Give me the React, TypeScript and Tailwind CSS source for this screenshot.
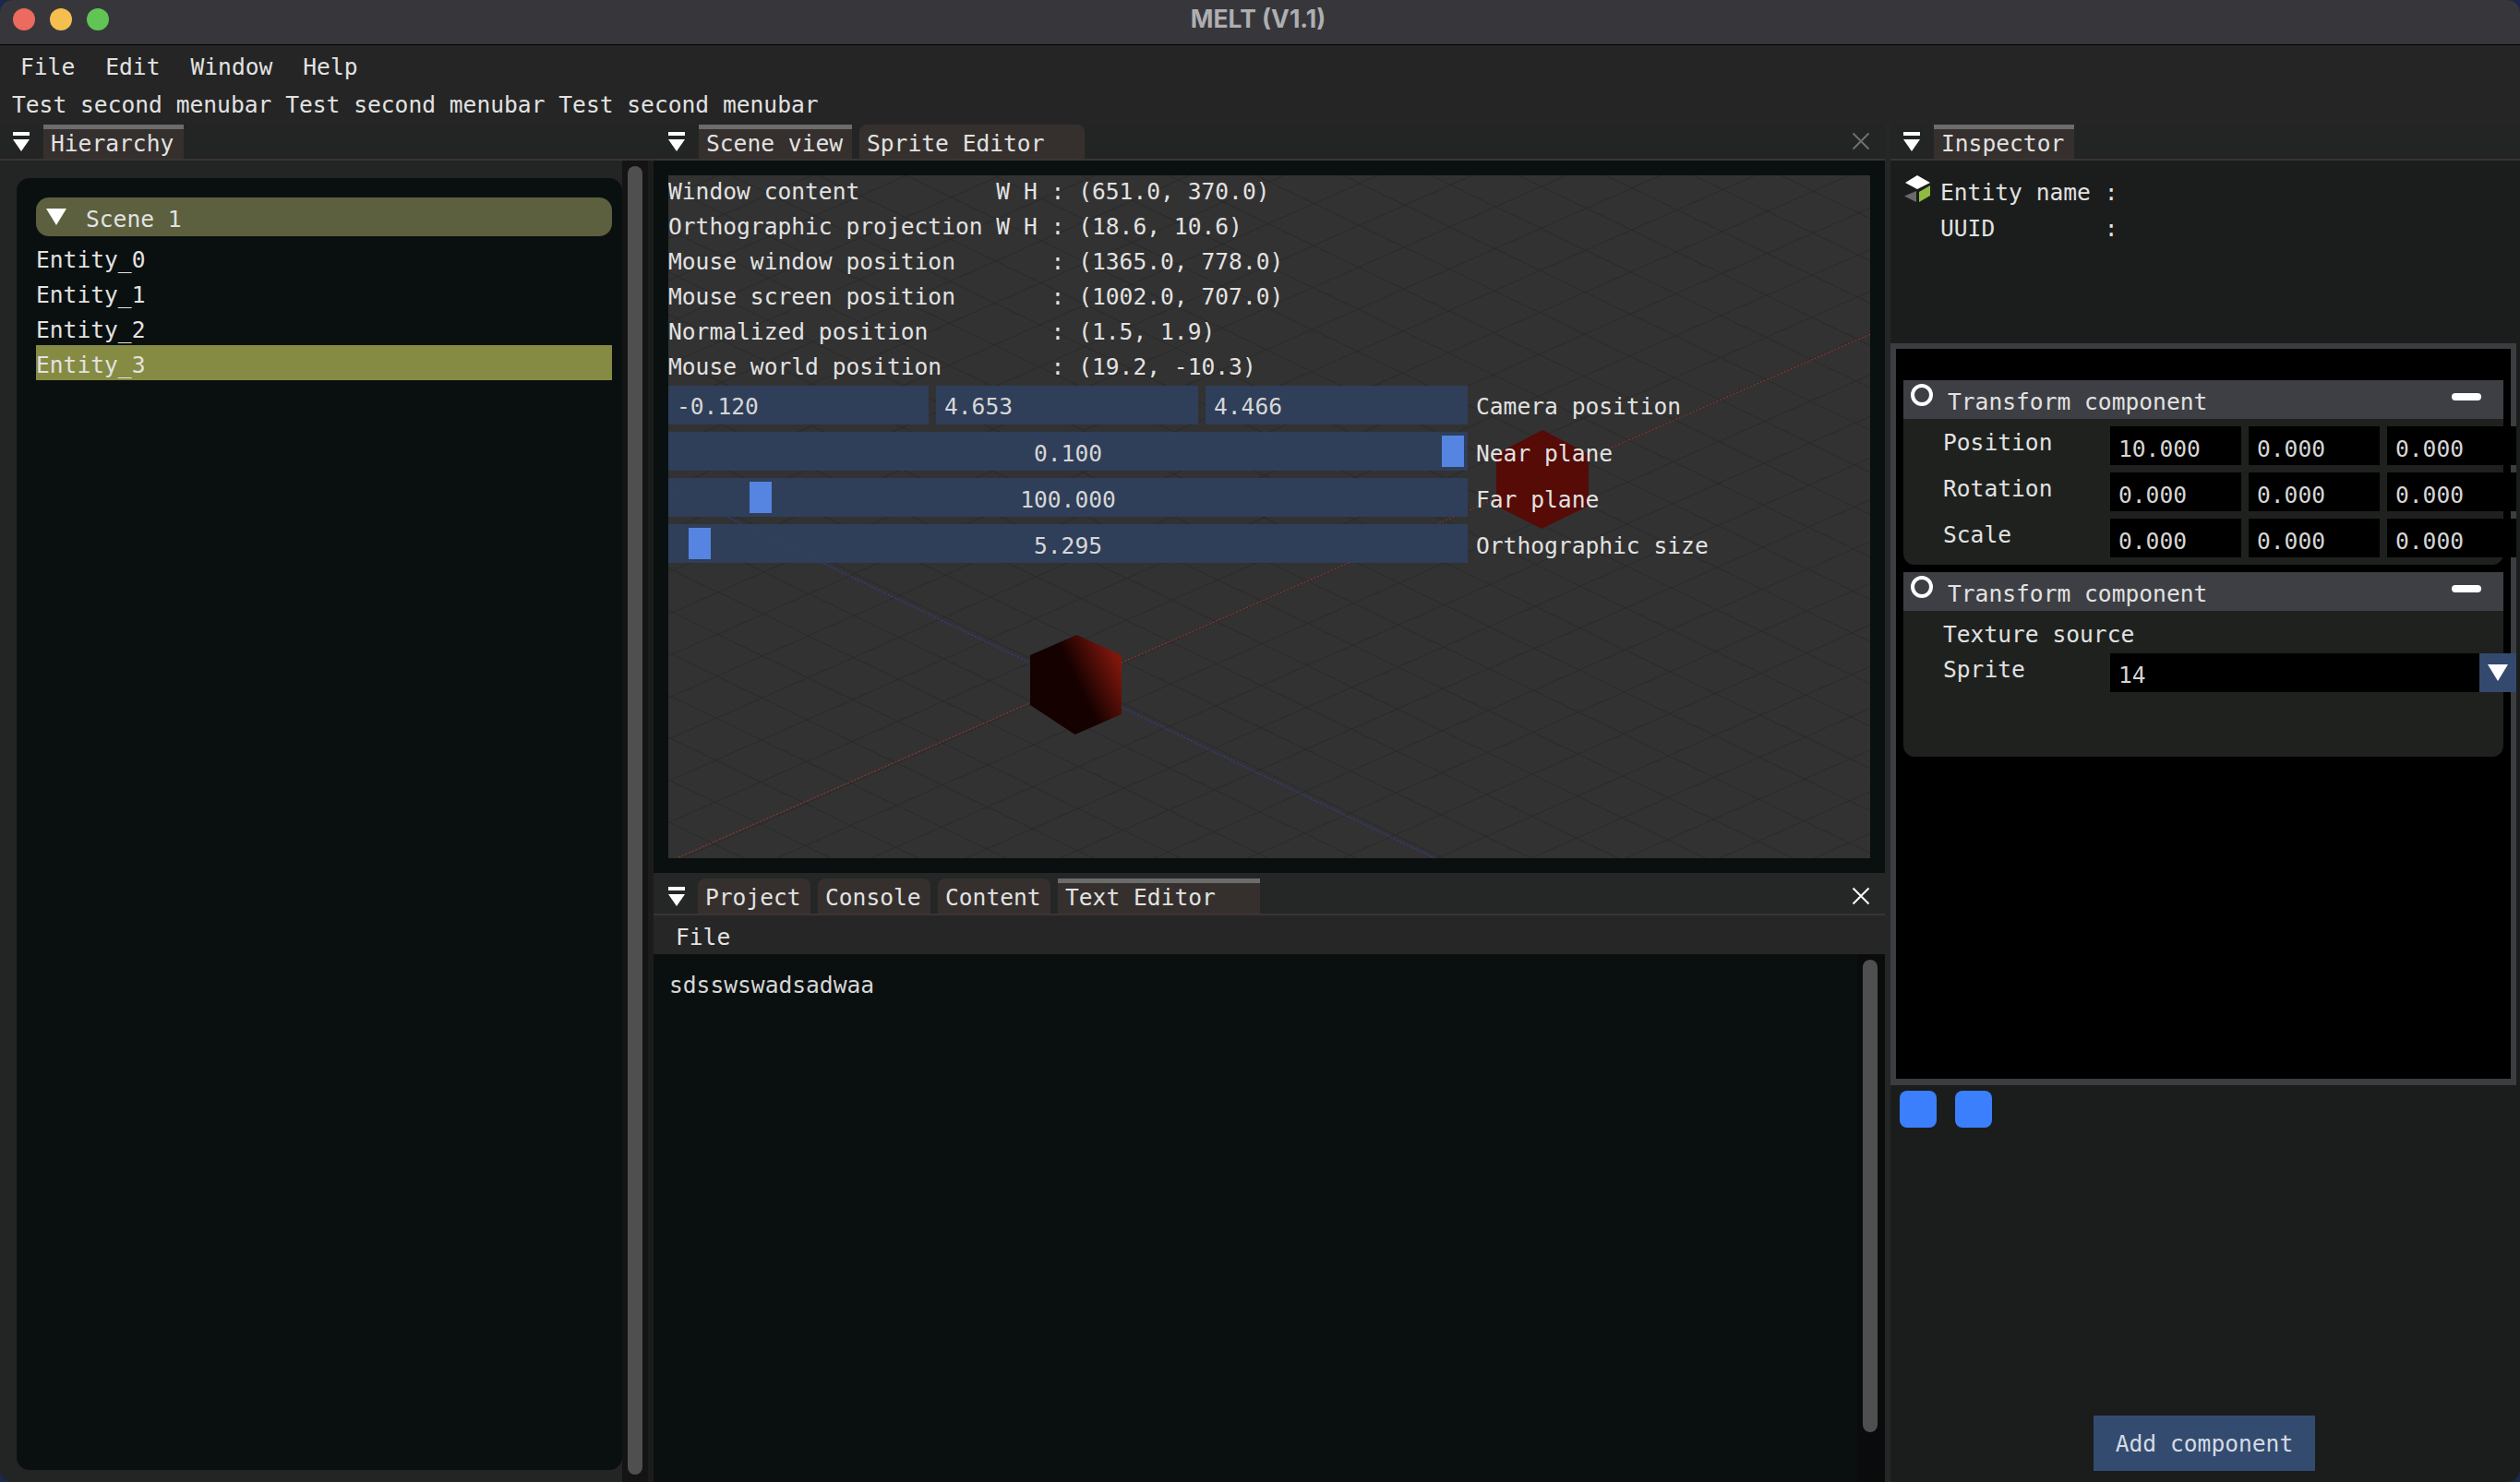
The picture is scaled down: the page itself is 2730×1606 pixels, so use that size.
import React from "react";

// dock tab-bar collapse icon
function DockIcon() {
  return (
    <svg width="18" height="21" viewBox="0 0 18 21" className="shrink-0">
      <rect x="0" y="0" width="18" height="4" fill="#fff" />
      <path d="M0 8H18L9 21Z" fill="#fff" />
    </svg>
  );
}

function CloseX({ color }: { color: string }) {
  return (
    <svg width="20" height="20" viewBox="0 0 20 20">
      <path d="M1.5 1.5L18.5 18.5M18.5 1.5L1.5 18.5" stroke={color} strokeWidth="2" />
    </svg>
  );
}

function Tab({ label, active, w }: { label: string; active?: boolean; w: string }) {
  return (
    <div
      className={`${w} flex h-full shrink-0 flex-col bg-[#35302e] ${active ? "" : "rounded-t-lg"}`}
    >
      <div className={`h-[5px] shrink-0 ${active ? "bg-[#6c6c6c]" : ""}`} />
      <div className="flex-1 pl-2 leading-[32px]">{label}</div>
    </div>
  );
}

function Ring() {
  return <div className="h-6 w-6 shrink-0 rounded-full border-[4px] border-white" />;
}

function CompHeader() {
  return (
    <div className="flex h-[42px] bg-[#3e3f44] pl-2">
      <div className="mt-1">
        <Ring />
      </div>
      <div className="ml-4 leading-[47px]">Transform component</div>
      <div className="ml-auto mr-6 mt-[14px] h-2 w-8 rounded-sm bg-white" />
    </div>
  );
}

function VecRow({ label, values }: { label: string; values: string[] }) {
  return (
    <div className="flex h-[42px]">
      <div className="w-[224px] shrink-0 pl-[43px] leading-[36px]">{label}</div>
      {values.map((v, i) => (
        <div
          key={i}
          className={`${i === 2 ? "w-[140px]" : "mr-2 w-[142px]"} relative h-[42px] shrink-0 bg-black pl-[9px] leading-[49px] text-[#d6d6d6]`}
        >
          {v}
        </div>
      ))}
    </div>
  );
}

function Slider({ value, label, grab }: { value: string; label: string; grab: React.ReactNode }) {
  return (
    <div className="flex h-[42px]">
      <div className="relative w-[866px] shrink-0 bg-[#2f3f5c]/95 text-center leading-[48px] text-[#d6d6d6]">
        {value}
        {grab}
      </div>
      <div className="ml-[9px] leading-[48px]">{label}</div>
    </div>
  );
}

// scene viewport: iso grid, axes and the two cubes
function SceneGrid() {
  const u = [49.5, -21.9];
  const v = [48.8, 23.6];
  const px = 791;
  const py = 487.3;
  const idx = Array.from({ length: 61 }, (_, i) => i - 30);
  return (
    <svg width="1302" height="740" className="absolute left-0 top-0">
      <defs>
        <linearGradient id="cube" gradientUnits="userSpaceOnUse" x1="443" y1="550" x2="488" y2="528">
          <stop offset="0" stopColor="#140100" />
          <stop offset="1" stopColor="#7e170d" />
        </linearGradient>
      </defs>
      {idx.map((j) => (
        <line
          key={`u${j}`}
          x1={px + j * v[0] - 40 * u[0]}
          y1={py + j * v[1] - 40 * u[1]}
          x2={px + j * v[0] + 40 * u[0]}
          y2={py + j * v[1] + 40 * u[1]}
          stroke="#2a2a2a"
          strokeWidth="1"
        />
      ))}
      {idx.map((i) => (
        <line
          key={`v${i}`}
          x1={px + i * u[0] - 40 * v[0]}
          y1={py + i * u[1] - 40 * v[1]}
          x2={px + i * u[0] + 40 * v[0]}
          y2={py + i * u[1] + 40 * v[1]}
          stroke="#2a2a2a"
          strokeWidth="1"
        />
      ))}
      <line x1="0" y1="744" x2="1302" y2="172" stroke="#a8352d" strokeWidth="1" strokeDasharray="2 2" />
      <line x1="0" y1="339.5" x2="1000" y2="822" stroke="#3341b8" strokeWidth="1" strokeDasharray="2 2" />
      <polygon points="947,276 997,302 997,358 946,383 897,358 897,302" fill="#560b06" />
      <polygon points="442.5,498 491,520 491,584 440.5,606 392,574 392,520" fill="url(#cube)" />
    </svg>
  );
}

function Cube() {
  return (
    <svg width="30" height="30" viewBox="0 0 30 30" className="shrink-0">
      <path d="M14 0L28 8L14 15L1 8Z" fill="#fff" />
      <path d="M16 18L28 11V22L16 29Z" fill="#8fbc3f" />
      <path d="M13 17V29L0 22.5Z" fill="#6a6a6a" />
    </svg>
  );
}

const info = [
  "Window content          W H : (651.0, 370.0)",
  "Orthographic projection W H : (18.6, 10.6)",
  "Mouse window position       : (1365.0, 778.0)",
  "Mouse screen position       : (1002.0, 707.0)",
  "Normalized position         : (1.5, 1.9)",
  "Mouse world position        : (19.2, -10.3)",
];

export default function App() {
  return (
    <div className="h-[1606px] w-[2730px] overflow-hidden bg-[#1c2750]">
      <div className="flex h-full w-full flex-col overflow-hidden rounded-[14px] bg-[#252626] font-['DejaVu_Sans_Mono',monospace] text-[24.6px] leading-[38px] whitespace-pre text-[#e2e2e2]">
        {/* title bar */}
        <div className="relative flex h-[49px] shrink-0 items-center border-b border-black bg-[#37373b] pb-[7px] pl-[14px]">
          <div className="flex gap-4">
            <div className="h-6 w-6 rounded-full bg-[#ec6a5e]" />
            <div className="h-6 w-6 rounded-full bg-[#f4bf4f]" />
            <div className="h-6 w-6 rounded-full bg-[#61c554]" />
          </div>
          <div className="absolute inset-x-0 top-[2px] pr-[4px] text-center font-['Inter',sans-serif] text-[26.5px] leading-[36px] font-bold text-[#aeaeb2]">
            MELT (V1.1)
          </div>
        </div>

        {/* menu bars */}
        <div className="flex h-[44px] shrink-0 items-center gap-[33px] bg-[#252525] pl-[22px] pt-[3px]">
          <span>File</span>
          <span>Edit</span>
          <span>Window</span>
          <span>Help</span>
        </div>
        <div className="flex h-[42px] shrink-0 items-center bg-[#252525] pl-[13px]">
          Test second menubar Test second menubar Test second menubar
        </div>

        <div className="flex min-h-0 flex-1">
          {/* hierarchy */}
          <div className="flex w-[708px] shrink-0 flex-col">
            <div className="flex h-[39px] shrink-0 border-b-2 border-[#3a3432] bg-[#232525]">
              <div className="ml-[14px] mr-[15px] mt-2">
                <DockIcon />
              </div>
              <Tab label="Hierarchy" active w="w-[152px]" />
            </div>
            <div className="flex min-h-0 flex-1 bg-[#232525]">
              <div className="mb-[13px] ml-[18px] mt-[19px] w-[656px] shrink-0 rounded-[14px] bg-[#0a1010] pl-[21px] pr-[11px] pt-[21px]">
                <div className="flex h-[42px] rounded-[14px] bg-[#5c603f] pl-[11px]">
                  <svg width="22" height="18" viewBox="0 0 22 18" className="mt-3 shrink-0">
                    <path d="M0 0H22L11 18Z" fill="#fff" />
                  </svg>
                  <span className="ml-[21px] leading-[48px]">Scene 1</span>
                </div>
                <div className="mt-1">
                  <div className="h-[38px] leading-[43px]">Entity_0</div>
                  <div className="h-[38px] leading-[43px]">Entity_1</div>
                  <div className="h-[38px] leading-[43px]">Entity_2</div>
                  <div className="h-[38px] bg-[#868b43] leading-[43px]">Entity_3</div>
                </div>
              </div>
              <div className="w-[28px] shrink-0 bg-[#141414] px-[6px] pt-[6px]">
                <div className="h-[1418px] rounded-full bg-[#4f4f4f]" />
              </div>
              <div className="w-[6px] shrink-0 bg-[#1c1c1c]" />
            </div>
          </div>

          {/* scene + bottom dock */}
          <div className="flex w-[1334px] shrink-0 flex-col">
            <div className="flex h-[39px] shrink-0 border-b-2 border-[#3a3432] bg-[#232525]">
              <div className="ml-4 mr-[15px] mt-2">
                <DockIcon />
              </div>
              <Tab label="Scene view" active w="w-[166px]" />
              <div className="w-2" />
              <Tab label="Sprite Editor" w="w-[244px]" />
              <div className="ml-auto mr-4 mt-[8px]">
                <CloseX color="#6f6f6f" />
              </div>
            </div>
            <div className="h-[772px] shrink-0 bg-[#0a1010] pb-4 pl-4 pr-4 pt-4">
              <div className="relative h-[740px] w-[1302px] overflow-hidden bg-[#323232]">
                <SceneGrid />
                <div className="relative">
                  {info.map((t) => (
                    <div key={t} className="h-[38px] leading-[36px]">
                      {t}
                    </div>
                  ))}
                  <div className="flex h-[42px]">
                    <div className="w-[282px] bg-[#2f3f5c]/95 pl-[9px] leading-[46px] text-[#d6d6d6]">-0.120</div>
                    <div className="ml-2 w-[284px] bg-[#2f3f5c]/95 pl-[9px] leading-[46px] text-[#d6d6d6]">4.653</div>
                    <div className="ml-2 w-[284px] bg-[#2f3f5c]/95 pl-[9px] leading-[46px] text-[#d6d6d6]">4.466</div>
                    <div className="ml-[9px] leading-[46px]">Camera position</div>
                  </div>
                  <div className="mt-2 flex flex-col gap-2">
                    <Slider
                      value="0.100"
                      label="Near plane"
                      grab={<div className="absolute left-[838px] top-1 h-[34px] w-6 bg-[#5585e0]" />}
                    />
                    <Slider
                      value="100.000"
                      label="Far plane"
                      grab={<div className="absolute left-[88px] top-1 h-[34px] w-6 bg-[#5585e0]" />}
                    />
                    <Slider
                      value="5.295"
                      label="Orthographic size"
                      grab={<div className="absolute left-[22px] top-1 h-[34px] w-6 bg-[#5585e0]" />}
                    />
                  </div>
                </div>
              </div>
            </div>

            <div className="flex h-[46px] shrink-0 items-end border-b-2 border-[#3a3432] bg-[#252626]">
              <div className="mb-2 ml-4 mr-[14px]">
                <DockIcon />
              </div>
              <div className="flex h-[38px] gap-2">
                <Tab label="Project" w="w-[122px]" />
                <Tab label="Console" w="w-[122px]" />
                <Tab label="Content" w="w-[122px]" />
                <Tab label="Text Editor" active w="w-[219px]" />
              </div>
              <div className="mb-[9px] ml-auto mr-4">
                <CloseX color="#ffffff" />
              </div>
            </div>
            <div className="h-[42px] shrink-0 bg-[#262626] pl-6 leading-[48px]">File</div>
            <div className="flex min-h-0 flex-1 bg-[#0a1010]">
              <div className="flex-1 pl-[17px] pt-[15px] text-[#d6d6d6]">sdsswswadsadwaa</div>
              <div className="w-[30px] shrink-0 bg-[#0a0b0c] pl-[6px] pt-[6px]">
                <div className="h-[512px] w-4 rounded-full bg-[#4f4f4f]" />
              </div>
            </div>
          </div>

          <div className="w-[6px] shrink-0 bg-[#252727]" />

          {/* inspector */}
          <div className="flex min-w-0 flex-1 flex-col">
            <div className="flex h-[39px] shrink-0 border-b-2 border-[#3a3432] bg-[#232525]">
              <div className="ml-[14px] mr-[15px] mt-2">
                <DockIcon />
              </div>
              <Tab label="Inspector" active w="w-[152px]" />
            </div>
            <div className="flex min-h-0 flex-1 flex-col bg-[#1b1d1c]">
              <div className="flex h-[198px] shrink-0 pl-[15px] pt-4">
                <Cube />
                <div className="ml-[9px] leading-[37px]">
                  <div className="h-[39px]">Entity name :</div>
                  <div className="h-[39px]">UUID        :</div>
                </div>
              </div>
              <div className="h-[804px] w-[678px] shrink-0 border-x-[6px] border-b-[7px] border-t-[6px] border-[#3b3d40] bg-black pl-2 pr-2 pt-[34px]">
                <div className="h-[200px] rounded-b-xl bg-[#1f211f]">
                  <CompHeader />
                  <div className="flex flex-col gap-2 pt-2">
                    <VecRow label="Position" values={["10.000", "0.000", "0.000"]} />
                    <VecRow label="Rotation" values={["0.000", "0.000", "0.000"]} />
                    <VecRow label="Scale" values={["0.000", "0.000", "0.000"]} />
                  </div>
                </div>
                <div className="mt-2 h-[200px] rounded-b-xl bg-[#1f211f]">
                  <CompHeader />
                  <div className="h-[46px] pl-[43px] leading-[52px]">Texture source</div>
                  <div className="flex h-[42px]">
                    <div className="w-[224px] shrink-0 pl-[43px] leading-[36px]">Sprite</div>
                    <div className="relative flex h-[42px] w-[440px] shrink-0 bg-black">
                      <div className="w-[400px] pl-[9px] leading-[47px] text-[#d6d6d6]">14</div>
                      <div className="flex w-10 justify-center bg-[#34496e] pt-3">
                        <svg width="22" height="18" viewBox="0 0 22 18">
                          <path d="M0 0H22L11 18Z" fill="#fff" />
                        </svg>
                      </div>
                    </div>
                  </div>
                </div>
              </div>
              <div className="ml-[10px] mt-[6px] flex gap-5">
                <div className="h-10 w-10 rounded-lg bg-[#3b7ffd]" />
                <div className="h-10 w-10 rounded-lg bg-[#3b7ffd]" />
              </div>
              <div className="mb-3 ml-[220px] mt-auto h-[60px] w-[240px] bg-[#344b70] text-center leading-[62px] text-[#d4dbe4]">
                Add component
              </div>
            </div>
          </div>
        </div>
      </div>
    </div>
  );
}
